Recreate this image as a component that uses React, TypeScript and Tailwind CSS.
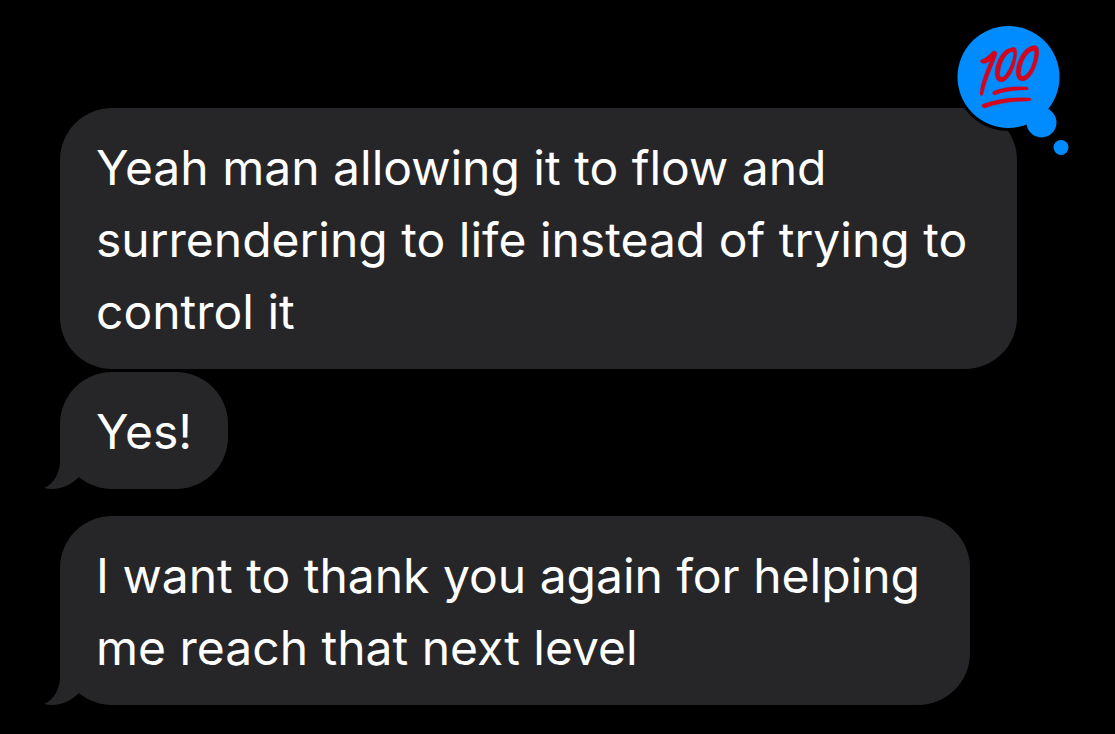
type Message = {
  id: number;
  lines: string[];
  tail?: boolean;
  reaction?: boolean;
  spacing: string;
};

const messages: Message[] = [
  {
    id: 1,
    lines: ['Yeah man allowing it to flow and', 'surrendering to life instead of trying to', 'control it'],
    reaction: true,
    spacing: '',
  },
  { id: 2, lines: ['Yes!'], tail: true, spacing: 'mt-[3px]' },
  {
    id: 3,
    lines: ['I want to thank you again for helping', 'me reach that next level'],
    tail: true,
    spacing: 'mt-[27px]',
  },
];

function Tail() {
  return (
    <svg
      viewBox="0 0 60 60"
      className="absolute bottom-0 -left-4 w-[60px] h-[60px] fill-[#262628]"
      aria-hidden="true"
    >
      <path d="M16 0 V32 C16 44 10 55 0 59 C12 62 25 58 35 48 L50 30 V0 Z" />
    </svg>
  );
}

function HundredReaction() {
  return (
    <svg
      viewBox="0 0 125 140"
      className="absolute -top-[88px] -right-[58px] w-[125px] h-[140px]"
      role="img"
      aria-label="Reacted with hundred points"
    >
      <circle cx="58.5" cy="57" r="54" fill="#000" />
      <g fill="#008cff">
        <circle cx="58.5" cy="57" r="51" />
        <circle cx="91.5" cy="102.5" r="15" />
        <circle cx="111" cy="127.5" r="7.5" />
      </g>
      <g fill="#d3041c" stroke="#d3041c" strokeWidth="0.3" strokeLinejoin="round">
        {/* one */}
        <path d="M31 40 C35 39 39 35 42 32 C44 30 47 31 47 34 C43 46 37 57 33 74 C32 77 30 76 30 73 C31 62 36 51 40 41 C37 43 34 44 32 43 C30 42 30 41 31 40 Z" />
        {/* zeros */}
        <path
          fillRule="evenodd"
          d="M61 28 C66 25 68 30 66 39 C64 50 59 60 52 62 C45 62 44 54 46 46 C49 36 54 29 61 28 Z M61 32 C56 34 51 42 50 51 C49 56 50 58 53 57 C57 54 61 46 63 38 C64 34 64 31 61 32 Z"
        />
        <path
          fillRule="evenodd"
          d="M82 26 C88 24 90 29 88 38 C86 49 80 60 73 61 C66 61 65 53 67 45 C70 35 76 27 82 26 Z M82 31 C77 33 72 41 71 50 C70 55 71 57 74 56 C79 53 83 45 84 37 C85 32 85 30 82 31 Z"
        />
        {/* underlines */}
        <path d="M44 71 C54 67 65 66 77 67 C79 68 79 70 76 70 C65 70 54 71 45 75 C42 75 42 72 44 71 Z" />
        <path d="M33 84 C47 79 63 77 80 78 C82 79 82 80 79 81 C64 81 49 83 35 88 C32 88 31 85 33 84 Z" />
      </g>
    </svg>
  );
}

function Bubble({ message }: { message: Message }) {
  const endPadding = message.lines.length > 1 ? 'pr-[50px]' : 'pr-9';

  return (
    <li
      className={`relative w-fit max-w-full rounded-[52px] bg-[#262628] pt-6 pb-[21px] pl-9 ${endPadding} ${message.spacing}`}
    >
      {message.tail && <Tail />}
      <p className="relative whitespace-pre-line">{message.lines.join('\n')}</p>
      {message.reaction && <HundredReaction />}
    </li>
  );
}

export default function App() {
  return (
    <main className="min-h-screen bg-black pt-[108px] pr-10 pb-7 pl-[60px] font-['Inter',sans-serif] text-[48px] leading-[72px] text-white">
      <ul>
        {messages.map((message) => (
          <Bubble key={message.id} message={message} />
        ))}
      </ul>
    </main>
  );
}
